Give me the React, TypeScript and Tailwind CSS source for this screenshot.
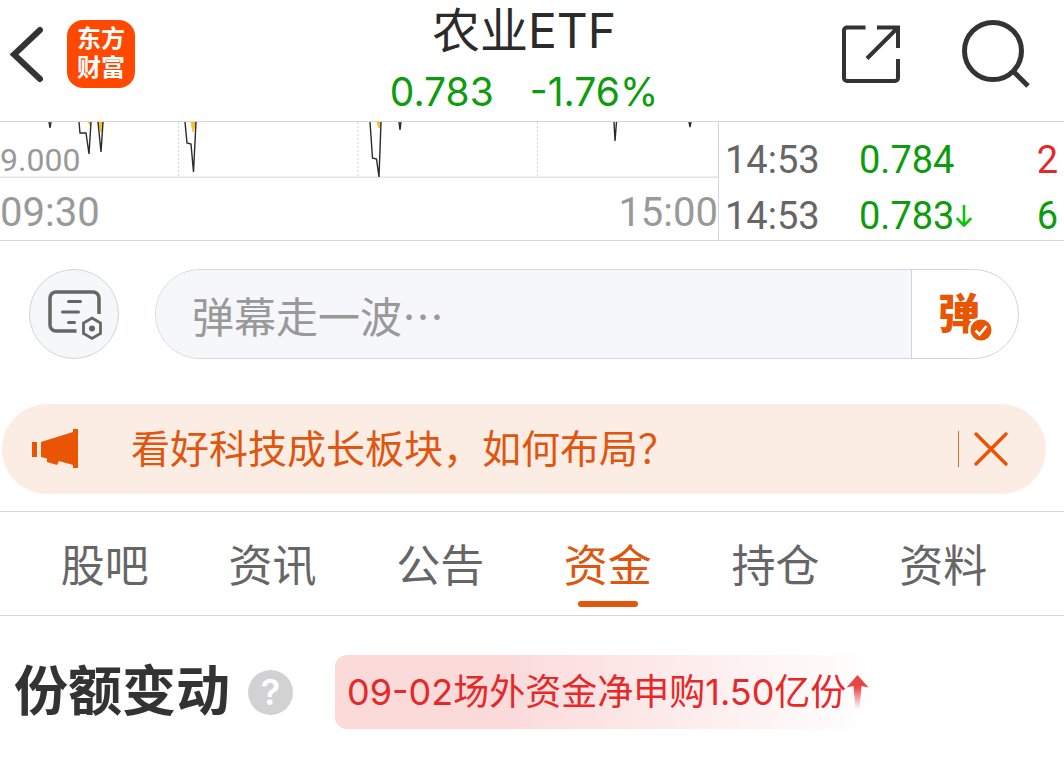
import { useState } from 'react';
import clsx from 'clsx';

const tabs = ['股吧', '资讯', '公告', '资金', '持仓', '资料'];

const trades = [
    { id: 1, time: '14:53', price: '0.784', volume: '2', isBuy: true, isLast: false },
    { id: 2, time: '14:53', price: '0.783', volume: '6', isBuy: false, isLast: true },
];

const BackIcon = () => (
    <svg className="w-9 h-[68px]" viewBox="0 0 36 68" fill="none" stroke="#333" strokeWidth="6">
        <path d="M32 10 6 34.500 32 59" strokeLinecap="round" strokeLinejoin="miter" />
    </svg>
);

const ShareIcon = () => (
    <svg className="w-[58px] h-[58px]" viewBox="0 0 58 58" fill="none" stroke="#333" strokeWidth="4">
        <path d="M23.500 2.500H5a3 3 0 0 0-3 3V53a3 3 0 0 0 3 3h48a3 3 0 0 0 3-3V34" />
        <path d="M35 2.500h21V23M55 3.500 25 33.500" />
    </svg>
);

const SearchIcon = () => (
    <svg className="w-[68px] h-[68px]" viewBox="0 0 68 68" fill="none" stroke="#333">
        <circle cx="31" cy="31" r="28.500" strokeWidth="5" />
        <path d="M51 51 66 66" strokeWidth="5" />
    </svg>
);

const DanmuSettingsIcon = () => (
    <svg className="w-14 h-[52px]" viewBox="0 0 56 52" fill="none" stroke="#666" strokeWidth="4">
        <path d="M30.500 41H10a6 6 0 0 1-6-6V8a6 6 0 0 1 6-6h37a6 6 0 0 1 6 6v16" strokeWidth="3.500" />
        <path d="M22.500 11.500h12M16.500 22h16M22.500 32.500h6" strokeWidth="3" strokeLinecap="round" />
        <path d="M46 28 54.500 33V43.500l-8.500 5-8.500-5V33Z" strokeWidth="2.800" />
        <circle cx="46" cy="38.500" r="3" fill="#666" stroke="none" />
    </svg>
);

const CheckBadge = () => (
    <svg className="w-[26px] h-[26px] absolute -right-3.5 -bottom-0.5" viewBox="0 0 26 26" fill="none">
        <circle cx="13" cy="13" r="13" fill="#fff" />
        <circle cx="13" cy="13" r="10.500" fill="#ea5504" />
        <path d="m7.500 13.500 4 4 7-8.500" stroke="#fff" strokeWidth="2.600" />
    </svg>
);

const HornIcon = () => (
    <svg className="w-[46px] h-10" viewBox="0 0 46 40" fill="#ea5504">
        <path d="M0 13h5v15H0zM9 13 41 3V0h5v39h-5v-3L27 32l-2 4-10-3v-3.500l-6-1.500Z" />
    </svg>
);

const CloseIcon = () => (
    <svg className="w-9 h-9" viewBox="0 0 36 36" fill="none" stroke="#ea5504">
        <path d="M3 3 33 33M33 3 3 33" strokeWidth="3.500" strokeLinecap="round" />
    </svg>
);

const DownArrow = () => (
    <svg className="w-4 h-[22px]" viewBox="0 0 16 22" fill="none" stroke="#08c808" strokeWidth="2.600">
        <path d="M8 1v19M1.500 14 8 20.500 14.500 14" strokeLinecap="round" />
    </svg>
);

const RiseArrow = () => (
    <svg className="w-[23px] h-[34px]" viewBox="0 0 22 34">
        <defs>
            <linearGradient id="rise" x1="0" y1="0" x2="0" y2="1">
                <stop offset="0.350" stopColor="#e94545" />
                <stop offset="1" stopColor="#e94545" stopOpacity="0" />
            </linearGradient>
        </defs>
        <path d="M11 0 22 12.500 15 11 13 34H9L7 11 0 12.500Z" fill="url(#rise)" />
    </svg>
);

const Header = () => (
    <header className="flex pl-2 pr-6 border-b border-[#d6d6d6]">
        <div className="flex flex-1 items-start gap-[23px] pt-5 pr-2.5">
            <button aria-label="返回">
                <BackIcon />
            </button>
            <a
                href="/"
                className="w-[68px] h-[68px] rounded-2xl bg-[#ff4800] text-white text-2xl leading-[29px] font-bold text-center pt-1"
            >
                东方
                <br />
                财富
            </a>
        </div>
        <div className="text-center">
            <h1 className="text-5xl leading-[62px] text-[#2b2b2b]">农业ETF</h1>
            <p className="flex justify-center gap-9 text-[39px] leading-[59px] text-[#0d9c0d]">
                <span>0.783</span>
                <span>-1.76%</span>
            </p>
        </div>
        <div className="flex flex-1 justify-end items-start gap-[62px] pt-5 pr-2.5">
            <button aria-label="分享" className="pt-[5px]">
                <ShareIcon />
            </button>
            <button aria-label="搜索">
                <SearchIcon />
            </button>
        </div>
    </header>
);

const Chart = () => (
    <div className="border-r border-[#d6d6d6]">
        <div className="relative">
            <svg className="block w-full h-14" viewBox="0 0 718 56" preserveAspectRatio="none" fill="none">
                <path d="M178.500 0V55M358 0V55M537.500 0V55" stroke="#d4d4d4" strokeDasharray="2 2" />
                <path d="M0 55.500H718" stroke="#e2e2e2" strokeWidth="2" />
                <path d="M88 0h3l-1 3ZM98 0h5l-2 10ZM191 0h5l-3 10ZM377 0h4l-2 6Z" fill="#f5c528" stroke="#f5c528" />
                <path
                    d="M49 0l1 6 1-6M79 0l1 11h6l3 21L91 0M98 0l3 30L103 0M185 0l2 21 4 1 2.500 28L196 0M370 0l2.500 36 4 1 2.500 18L381 0M399 0l1 8 1-8M614 0l1 19 1.500-19M689 0l1 5 1-5"
                    stroke="#2b2b2b"
                    strokeWidth="1.400"
                />
            </svg>
            <span className="absolute left-0 bottom-0 text-[32px] leading-9 text-[#999]">9.000</span>
        </div>
        <div className="flex justify-between text-[40px] leading-[62px] pt-1 h-[62px] text-[#999]">
            <span>09:30</span>
            <span>15:00</span>
        </div>
    </div>
);

const Trades = () => (
    <table className="w-full mt-2.5 -mb-1 text-[38px] leading-[56px]">
        <tbody>
            {trades.map(({ id, time, price, volume, isBuy, isLast }) => (
                <tr key={id}>
                    <td className="p-0 pl-1.5 w-[140px] text-[#666]">{time}</td>
                    <td className="p-0 text-[#0d9c0d]">
                        <span className="flex items-center gap-0.5">
                            {price}
                            {isLast && <DownArrow />}
                        </span>
                    </td>
                    <td className={clsx('p-0 pr-1.5 text-right', isBuy ? 'text-[#e62828]' : 'text-[#0d9c0d]')}>
                        {volume}
                    </td>
                </tr>
            ))}
        </tbody>
    </table>
);

const DanmuBar = () => (
    <form className="flex gap-9 pt-7 pl-[29px] pr-[45px]" onSubmit={(e) => e.preventDefault()}>
        <button
            type="button"
            aria-label="弹幕设置"
            className="w-[90px] h-[90px] pt-1 shrink-0 rounded-full border border-[#d3d5da] bg-[#f6f7fa] flex justify-center items-center"
        >
            <DanmuSettingsIcon />
        </button>
        <div className="flex flex-1 h-[90px] rounded-full border border-[#d3d5da] overflow-hidden">
            <input
                type="text"
                aria-label="弹幕"
                placeholder="弹幕走一波…"
                className="flex-1 min-w-0 pl-9 bg-[#f6f7fa] font-['Noto_Sans_CJK_SC',sans-serif] text-[42px] outline-none placeholder:text-[#999] placeholder:opacity-100"
            />
            <button
                type="button"
                aria-label="弹幕开关"
                className="w-[107px] border-l border-[#d3d5da] flex justify-center items-center pr-3"
            >
                <span className="relative text-[42px] leading-[54px] font-black text-[#ea5504]">
                    弹
                    <CheckBadge />
                </span>
            </button>
        </div>
    </form>
);

const Notice = () => {
    const [isShown, setIsShown] = useState(true);

    if (!isShown) return null;

    return (
        <div className="mt-[45px] ml-0.5 mr-[18px] h-[90px] pl-[30px] pr-[37px] rounded-full bg-[#fcede4] flex items-center">
            <HornIcon />
            <a href="#notice" className="flex-1 ml-[53px] text-[39px] text-[#e0560f]">
                {'看好科技成长板块\uff0c如何布局\uff1f'}
            </a>
            <button
                aria-label="关闭"
                className="flex items-center gap-3.5 before:w-px before:h-9 before:bg-[#d0703a]"
                onClick={() => setIsShown(false)}
            >
                <CloseIcon />
            </button>
        </div>
    );
};

const Tabs = () => {
    const [active, setActive] = useState('资金');

    return (
        <nav className="mt-[17px] pl-[21px] pr-[37px] grid grid-cols-6 border-y border-[#d6d6d6]">
            {tabs.map((tab) => (
                <button
                    key={tab}
                    className={clsx(
                        'flex flex-col items-center h-[103px] pt-5 text-[44px] leading-[69px]',
                        tab === active ? 'text-[#e0560f]' : 'text-[#666]'
                    )}
                    onClick={() => setActive(tab)}
                >
                    {tab}
                    {tab === active && <span className="w-[60px] h-1.5 rounded-full bg-[#e0560f]" />}
                </button>
            ))}
        </nav>
    );
};

const ShareChange = () => (
    <section className="flex items-center pt-[39px] pl-3.5">
        <h2 className="text-[54px] leading-[74px] font-bold text-[#333]">份额变动</h2>
        <button
            aria-label="说明"
            className="ml-[18px] w-[45px] h-[45px] rounded-full bg-[#d2d2d4] text-white text-4xl font-semibold flex justify-center items-center"
        >
            ?
        </button>
        <p className="ml-[42px] h-[74px] pl-3 pr-2.5 rounded-xl bg-linear-to-r from-[#fbdada] from-30% to-white flex items-center text-4xl text-[#e62828]">
            09-02场外资金净申购1.50亿份
            <RiseArrow />
        </p>
    </section>
);

const App = () => (
    <div className="min-h-screen overflow-hidden bg-white font-[Inter,'Noto_Sans_CJK_SC',sans-serif]">
        <Header />
        <div className="grid grid-cols-[719fr_345fr] border-b border-[#d6d6d6] font-[Roboto,sans-serif]">
            <Chart />
            <Trades />
        </div>
        <main lang="zh-CN">
            <DanmuBar />
            <Notice />
            <Tabs />
            <ShareChange />
        </main>
    </div>
);

export default App;
